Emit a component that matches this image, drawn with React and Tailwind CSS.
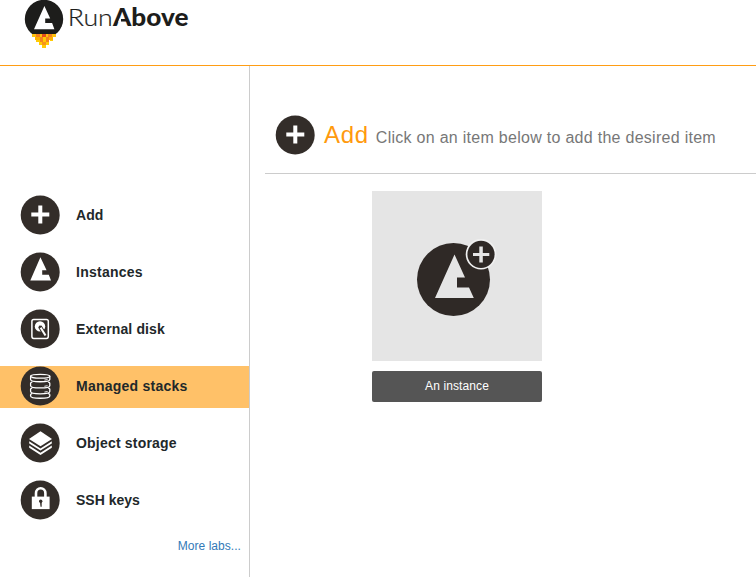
import React from "react";

const DARK = "#332d29";

function Disc({ children }) {
  return (
    <svg className="block size-10 shrink-0" viewBox="0 0 40 40">
      <circle cx="20.2" cy="20" r="19.5" fill={DARK} />
      {children}
    </svg>
  );
}

function PlusIcon() {
  return (
    <Disc>
      <path d="M18.300 10.500h4v7h7v4h-7v7h-4v-7h-7v-4h7z" fill="#fff" />
    </Disc>
  );
}

function InstanceIcon() {
  return (
    <Disc>
      <path d="M20.400 5.300l6.200 12.900h-4.400v4.600h6.600l2.200 5.700H10.300z" fill="#fff" />
    </Disc>
  );
}

function DiskIcon() {
  return (
    <Disc>
      <rect x="11.900" y="10.400" width="16.400" height="19" rx="1.800" fill="none" stroke="#fff" strokeWidth="1.500" />
      <circle cx="20" cy="17.400" r="5.200" fill="#fff" />
      <path d="M19.800 17.500l5.400 8.500" stroke={DARK} strokeWidth="4" />
      <path d="M20.500 18.500l5 8" stroke="#fff" strokeWidth="2" />
      <circle cx="20" cy="17.600" r="1.200" fill={DARK} />
    </Disc>
  );
}

function StackIcon() {
  return (
    <Disc>
      <g fill="none" stroke="#fff" strokeWidth="1.300" strokeLinecap="round">
        <ellipse cx="20.200" cy="10.200" rx="9.600" ry="1.900" />
        <path d="M10.600 10.200v3.300c0 3 19.200 3 19.200 0v-3.300" />
        <path d="M11.800 16.200c-.8.300-1.200.7-1.200 1v2.500c0 3 19.200 3 19.200 0v-2.500c0-.3-.4-.7-1.200-1" />
        <path d="M11.800 22.100c-.8.300-1.200.7-1.200 1v2.500c0 3 19.200 3 19.200 0v-2.500c0-.3-.4-.7-1.200-1" />
        <path d="M11.800 27.700c-.8.300-1.200.7-1.200 1v1.300c0 3 19.200 3 19.200 0v-1.300c0-.3-.4-.7-1.200-1" />
        <path d="M24.800 14l2.400-.4M24.800 20.200l2.400-.4M24.800 26l2.400-.4" strokeWidth=".9" />
      </g>
    </Disc>
  );
}

function LayersIcon() {
  return (
    <Disc>
      <g fill="#fff">
        <path d="M20.500 8.200L32 15.900l-11.500 7.300L9 15.900z" />
        <path d="M9.200 18.200l11.300 7.200 11.300-7.200v2.200l-11.300 7.200L9.200 20.400z" />
        <path d="M9.200 22.600l11.300 7.200 11.300-7.200v2.200L20.500 32.100 9.200 24.800z" />
      </g>
    </Disc>
  );
}

function LockIcon() {
  return (
    <Disc>
      <path d="M16 17.500v-4.200a4.700 5 0 0 1 9.400 0v4.200" fill="none" stroke="#fff" strokeWidth="2.600" />
      <rect x="11.800" y="16.600" width="17.800" height="12.500" fill="#fff" />
      <circle cx="20.700" cy="21.300" r="1.700" fill={DARK} />
      <path d="M20 22h1.700v4.700h-1.200z" fill={DARK} />
    </Disc>
  );
}

function Logo() {
  return (
    <svg className="block h-12 w-[190px]" viewBox="0 0 190 48">
      <circle cx="44" cy="19" r="19.200" fill="#1d1d1b" />
      <path d="M30 34h28v5H30z" fill="#fff" />
      <g shapeRendering="crispEdges">
        <path d="M32 34h24v3H32z" fill="#ffc20e" />
        <path d="M36 34h4v3h-4zM48 34h4v3h-4zM40 37h3v3h-3zM46 37h3v3h-3z" fill="#f58220" />
        <path d="M42 34h4v3h-4z" fill="#e84e1b" />
        <path d="M35 37h5v3h-5zM49 37h4v3h-4z" fill="#ffb000" />
        <path d="M43 37h3v3h-3zM36 40h4v2h-4zM46 40h3v1h-3zM50 40h3v1h-3z" fill="#ffcb05" />
        <path d="M40 40h3v2h-3zM46 40h3v2h-3z" fill="#f58220" />
        <path d="M43 40h3v2h-3zM39 42h3v3h-3zM46 42h3v3h-3zM42 45h4v3h-4z" fill="#ffcb05" />
        <path d="M42 42h4v3h-4z" fill="#f7941d" />
      </g>
      <path d="M44.400 6l5.800 12.500h-5v4.500h6.900l2.300 6.200H34z" fill="#fff" />
      <text x="67.800" y="25.500" fontFamily="Lato, sans-serif" fontWeight="300" fontSize="24" textLength="45" lengthAdjust="spacingAndGlyphs" fill="#1d1d1b" stroke="#1d1d1b" strokeWidth=".2">Run</text>
      <text x="113" y="25.500" fontFamily="Lato, sans-serif" fontWeight="900" fontSize="24" textLength="75.500" lengthAdjust="spacingAndGlyphs" fill="#1d1d1b">Above</text>
      <path d="M119.200 18.800h1.800v3.500h-3z" fill="#fff" />
    </svg>
  );
}

const ITEMS = [
  { label: "Add", icon: PlusIcon, ls: "tracking-[0.1px]" },
  { label: "Instances", icon: InstanceIcon, ls: "tracking-[0.25px]" },
  { label: "External disk", icon: DiskIcon, ls: "tracking-[0.14px]" },
  { label: "Managed stacks", icon: StackIcon, ls: "tracking-[0.25px]", active: true },
  { label: "Object storage", icon: LayersIcon, ls: "tracking-[0.2px]" },
  { label: "SSH keys", icon: LockIcon, ls: "tracking-[0px]" },
];

export default function App() {
  return (
    <div className="flex h-[577px] w-[756px] flex-col overflow-hidden bg-white font-['Liberation_Sans',sans-serif]">
      <header className="h-[66px] shrink-0 border-b border-[#ff9d14]">
        <Logo />
      </header>
      <div className="flex min-h-0 flex-1">
        <aside className="w-[250px] shrink-0 border-r border-[#ccc] pt-[129px]">
          <nav className="flex flex-col gap-[15px]">
            {ITEMS.map(({ label, icon: Icon, ls, active }) => (
              <a key={label} className={`flex h-[42px] items-start gap-4 pl-5 ${active ? "bg-[#ffc168]" : ""}`}>
                <Icon />
                <span className={`text-sm leading-10 font-bold whitespace-nowrap text-[#22282a] ${ls}`}>{label}</span>
              </a>
            ))}
          </nav>
          <div className="pt-4 pr-2 text-right text-xs leading-4 text-[#337ab7]">
            <a className="tracking-[0.05px]">More labs...</a>
          </div>
        </aside>
        <main className="flex-1 pl-[15px]">
          <div className="flex h-[108px] items-start border-b border-[#ccc] pt-[49px] pl-2.5">
            <PlusIcon />
            <h1 className="flex items-baseline gap-[7px] pl-[9px] leading-10 whitespace-nowrap">
              <span className="text-2xl leading-10 tracking-[0.7px] text-[#ff9a0d]">Add</span>
              <span className="text-base leading-10 tracking-[0.28px] text-[#777]">Click on an item below to add the desired item</span>
            </h1>
          </div>
          <div className="ml-[107px] flex w-[170px] flex-col gap-2.5 pt-[17px]">
            <div className="h-[170px] bg-[#e5e5e5]">
              <svg className="block size-[170px]" viewBox="0 0 170 170">
                <circle cx="81.500" cy="88.500" r="36.500" fill="#2f2926" />
                <path d="M82.500 63.500L93 86.500h-8V96.500h12l4.800 10.500H63z" fill="#e5e5e5" />
                <circle cx="109" cy="63.300" r="15.300" fill="#f1f1f1" />
                <circle cx="109" cy="63.300" r="13.600" fill="#2f2926" />
                <path d="M107.300 55.500h3.500v6.500h6.500v3h-6.500v6.500h-3.500V65h-6.300v-3h6.300z" fill="#e5e5e5" />
              </svg>
            </div>
            <button className="h-[31px] rounded-[2px] bg-[#555] text-center text-xs leading-[31px] tracking-[0.1px] text-white">An instance</button>
          </div>
        </main>
      </div>
    </div>
  );
}
